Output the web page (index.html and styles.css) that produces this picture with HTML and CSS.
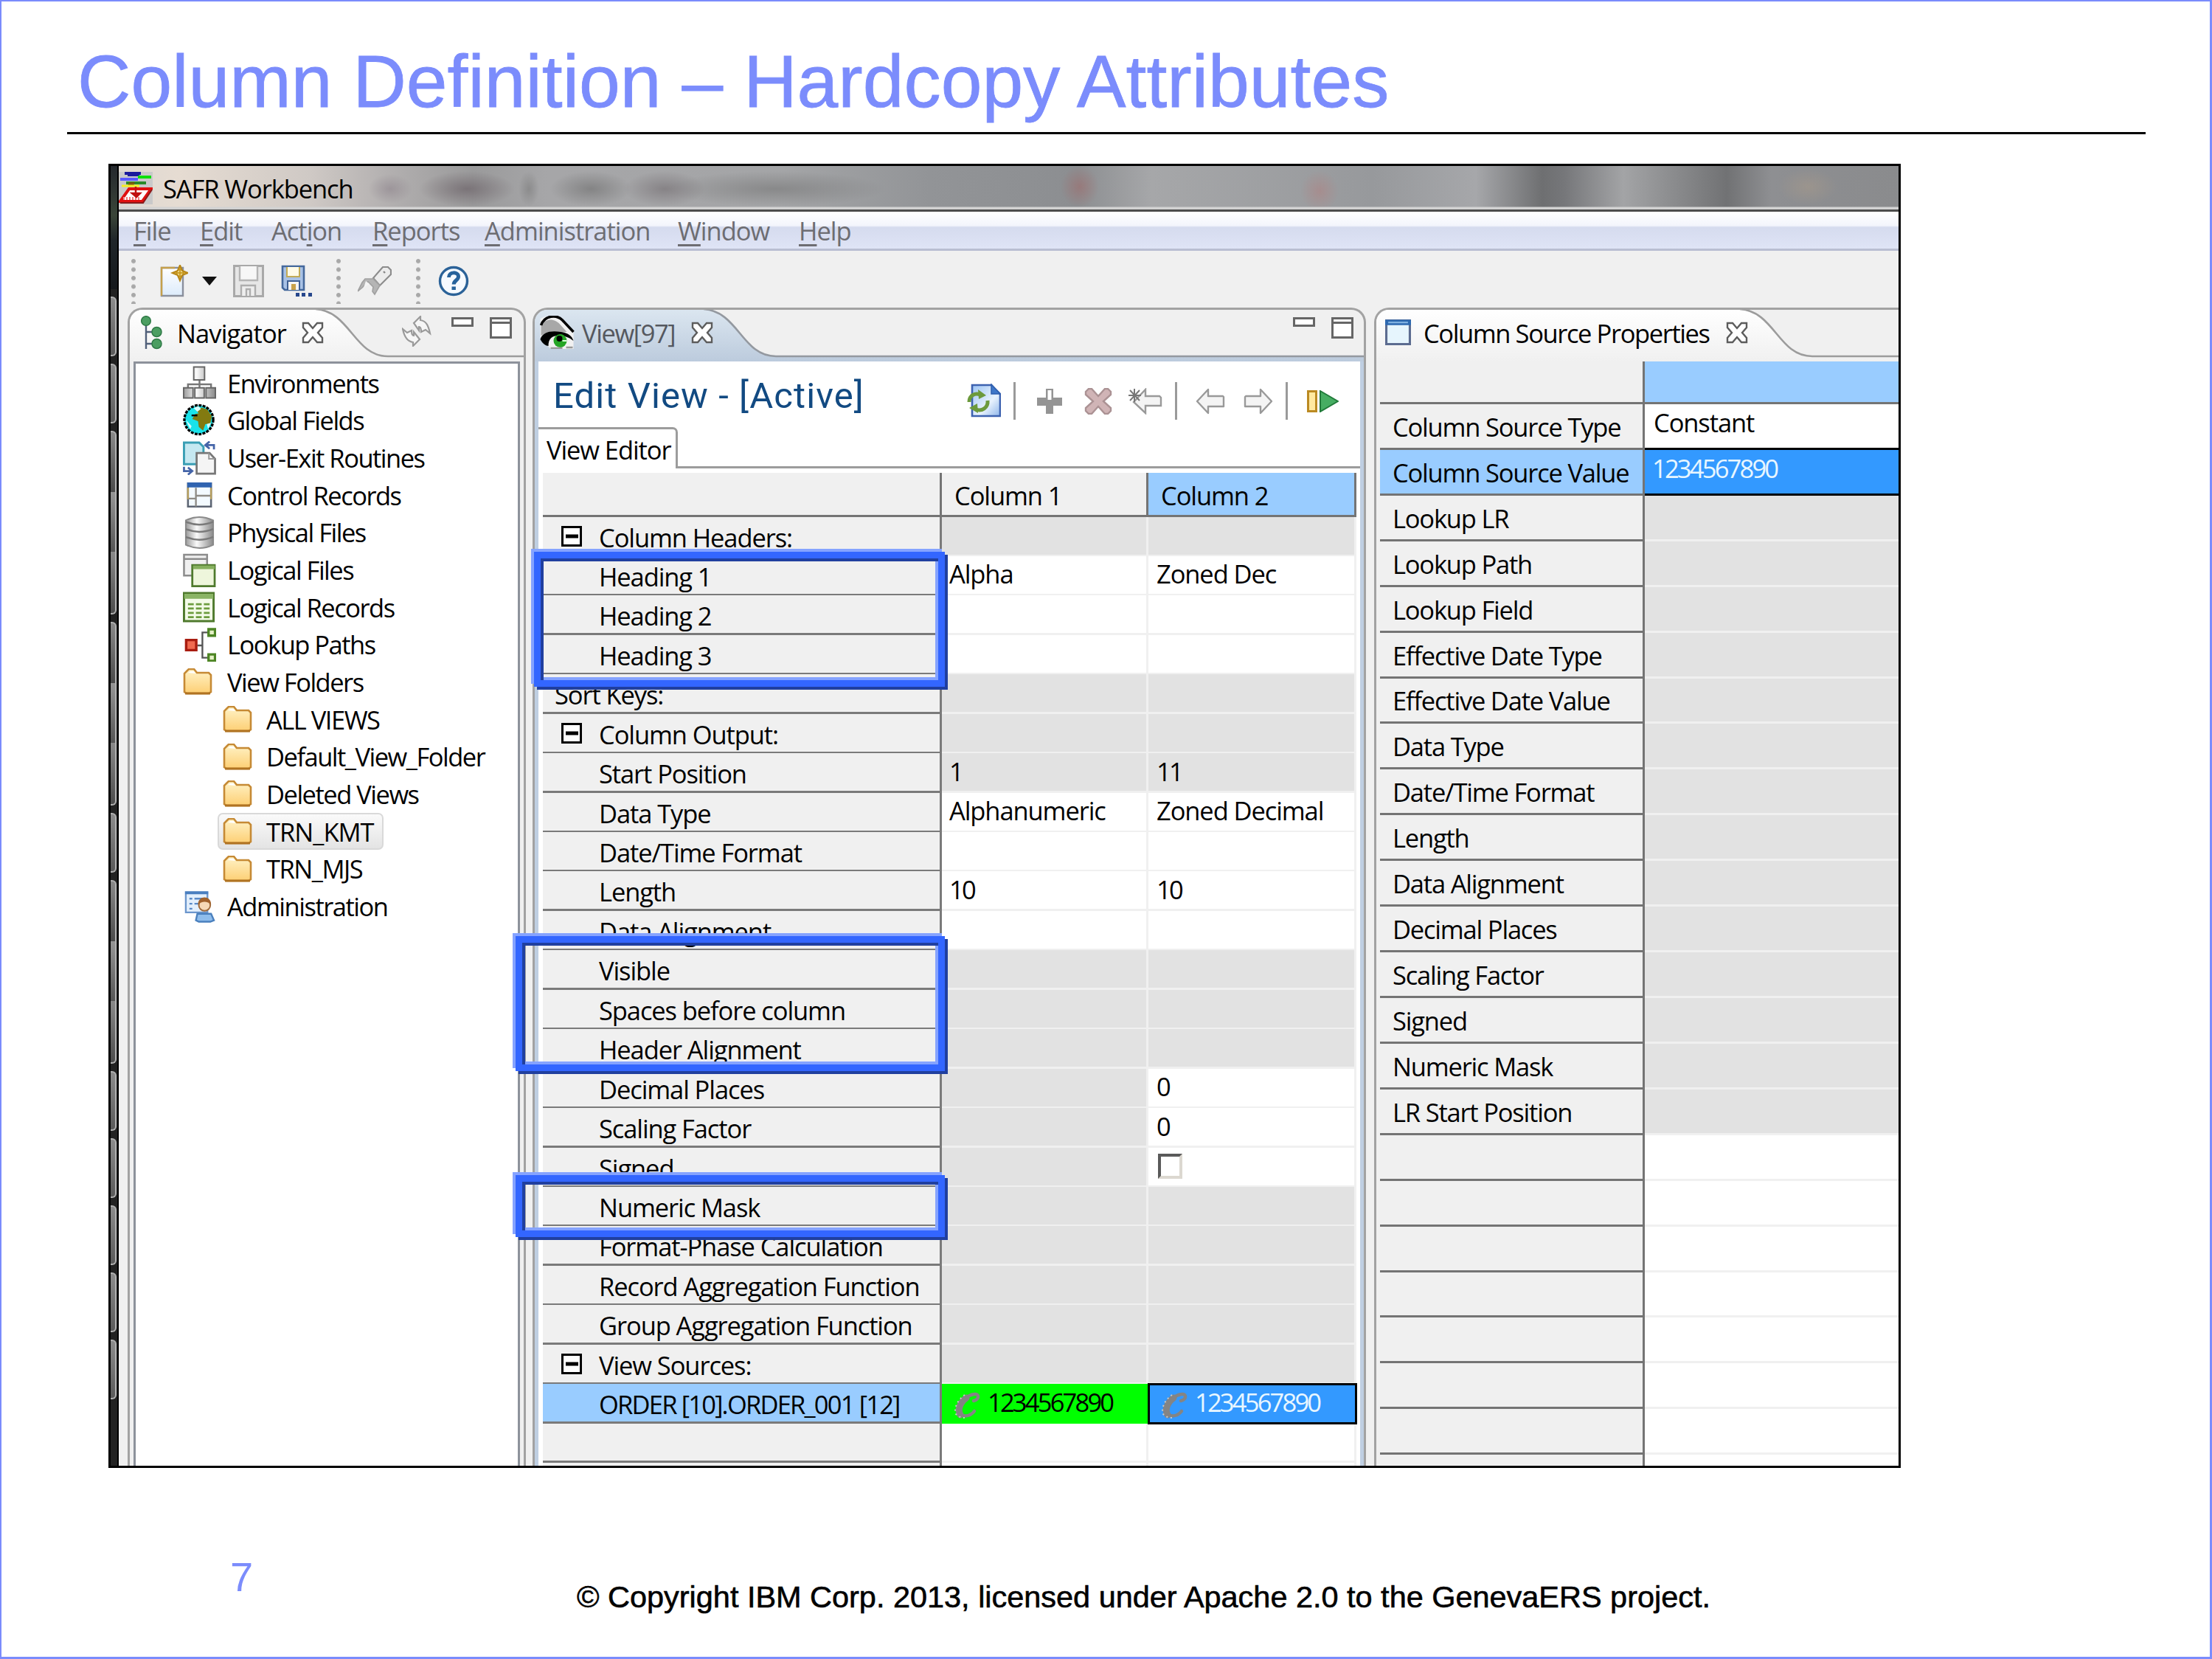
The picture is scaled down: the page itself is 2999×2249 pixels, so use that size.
FILE: index.html
```html
<!DOCTYPE html>
<html lang="en">
<head>
<meta charset="utf-8">
<title>Column Definition – Hardcopy Attributes</title>
<link rel="stylesheet" href="styles.css">
</head>
<body>
<svg class="defs" aria-hidden="true">
  <defs>
    <linearGradient id="gFolder" x1="0" y1="0" x2="0" y2="1"><stop offset="0" stop-color="#fff3c8"/><stop offset="1" stop-color="#fdcf74"/></linearGradient>
    <linearGradient id="gGrey" x1="0" y1="0" x2="1" y2="0"><stop offset="0" stop-color="#9a9a9a"/><stop offset=".4" stop-color="#fafafa"/><stop offset="1" stop-color="#8a8a8a"/></linearGradient>
    <linearGradient id="gBlueTab" x1="0" y1="0" x2="0" y2="1"><stop offset="0" stop-color="#dbe6f0"/><stop offset="1" stop-color="#bccbdd"/></linearGradient>
    <linearGradient id="gWhiteTab" x1="0" y1="0" x2="0" y2="1"><stop offset="0" stop-color="#ffffff"/><stop offset="1" stop-color="#f0f0f0"/></linearGradient>
    <linearGradient id="gDoc" x1="0" y1="0" x2="1" y2="1"><stop offset="0" stop-color="#9cc4f4"/><stop offset=".6" stop-color="#e8f2fd"/><stop offset="1" stop-color="#8fb6ea"/></linearGradient>
    <linearGradient id="gSky" x1="0" y1="0" x2="0" y2="1"><stop offset="0" stop-color="#ffffff"/><stop offset="1" stop-color="#dcebfb"/></linearGradient>
  </defs>
  <symbol id="folder" viewBox="0 0 40 36"><path d="M2 32V7l3-3 3-3h7l4 5h16l3 3v23l-3 2H5z" fill="url(#gFolder)" stroke="#c68a35" stroke-width="2.6"/><path d="M3 34h34" stroke="#b07322" stroke-width="3"/><path d="M7 6l3-2h5l2 3" fill="#fff" stroke="none"/></symbol>
  <symbol id="close" viewBox="0 0 30 30"><path d="M2 2h7l6 7 6-7h7v6l-6 7 6 7v6h-7l-6-7-6 7H2v-6l6-7-6-7z" fill="#fff" stroke="#5c5c5c" stroke-width="2.4"/></symbol>
  <symbol id="min" viewBox="0 0 30 13"><path d="M1.5 1.5h27v10h-27z" fill="#fff" stroke="#666" stroke-width="3"/></symbol>
  <symbol id="max" viewBox="0 0 30 29"><path d="M1.5 1.5h27v26h-27zM1 7.5h28" fill="#fff" stroke="#666" stroke-width="3"/></symbol>
  <symbol id="minus" viewBox="0 0 28 28"><path d="M1.5 1.5h25v25h-25z" fill="#fff" stroke="#000" stroke-width="3"/><path d="M6 14h17" stroke="#000" stroke-width="5"/></symbol>
  <symbol id="left" viewBox="0 0 40 36"><path d="M2 18L17 2v9h20l1 1v13h-21v9z" fill="#f4f4f4" stroke="#999" stroke-width="2.4" stroke-linejoin="round"/></symbol>
  <symbol id="const" viewBox="0 0 38 36"><path d="M27 12c8-2 8-10 1-9-9 1-19 10-20 20-1 13 14 11 20 3" fill="none" stroke="#848484" stroke-width="4.5" stroke-linecap="round"/><path d="M17 8C8 15 5 24 9 31" fill="none" stroke="#848484" stroke-width="9" stroke-linecap="round"/><path d="M15 4C5 11 0 22 3 30l7 5h8" fill="none" stroke="#c8c8c8" stroke-width="2" stroke-dasharray="2 4"/></symbol>
</svg>

<main class="slide">
  <h1 class="slide-title">Column Definition – Hardcopy Attributes</h1>
  <div class="rule"></div>

  <section class="shot">
    <div class="taskbar">
      <i class="tb-top"></i><i class="tb s1"></i><i class="tb s1"></i><i class="tb s3"></i><i class="tb s3"></i><i class="tb s1"></i><i class="tb s3"></i><i class="tb s1"></i><i class="tb s1"></i><i class="tb s1"></i><i class="tb s1"></i><i class="tb s1"></i>
    </div>

    <div class="window">
      <header class="titlebar">
        <svg class="app-icon" viewBox="0 0 46 44"><path d="M0 0h46v44H0z" fill="#c9c9c9"/><path d="M8 2h22M12 4h16" stroke="#1a1a9c" stroke-width="4"/><path d="M2 10h24" stroke="#5a5aff" stroke-width="4"/><path d="M26 7h18" stroke="#0be00b" stroke-width="4"/><path d="M10 15h27" stroke="#2a8a2a" stroke-width="4"/><path d="M14 14h8l-2 5h-8z" fill="#7a5a10"/><path d="M4 19h24" stroke="#f4ee20" stroke-width="3"/><path d="M14 23h30L32 40H2z" fill="#fff" stroke="#e01010" stroke-width="4"/><path d="M2 42h31l12-18" fill="none" stroke="#8a1a1a" stroke-width="2"/><path d="M6 36h22" stroke="#f08080" stroke-width="4" stroke-dasharray="2 2"/><path d="M18 29h11l-5 5zM23 20v12" stroke="#c01010" stroke-width="2.500" fill="#c01010"/></svg>
        <span class="app-name">SAFR Workbench</span>
      </header>

      <nav class="menubar">
        <span class="m-file"><u>F</u>ile</span><span class="m-edit"><u>E</u>dit</span><span class="m-action">Act<u>i</u>on</span><span class="m-reports"><u>R</u>eports</span><span class="m-admin"><u>A</u>dministration</span><span class="m-window"><u>W</u>indow</span><span class="m-help"><u>H</u>elp</span>
      </nav>

      <div class="toolbar">
        <i class="grip"></i>
        <svg class="t-new" viewBox="0 0 38 44"><path d="M2 4h29v38H2z" fill="url(#gSky)" stroke="#8a8f9c" stroke-width="2.4"/><path d="M2 42V4h18" fill="none" stroke="#c5a04b" stroke-width="2.4"/><path d="M27 1l3 7 7 3-7 3-3 7-3-7-7-3 7-3z" fill="#fff3b0" stroke="#b98716" stroke-width="2.4"/><path d="M27 5v12M21 11h12" stroke="#c99a20" stroke-width="2"/></svg>
        <svg class="t-drop" viewBox="0 0 20 12"><path d="M0 0h20L10 12z" fill="#111"/></svg>
        <svg class="t-save" viewBox="0 0 42 44"><path d="M1.5 1.5h39v41h-39z" fill="#e6e6e6" stroke="#a9a9a9" stroke-width="3"/><path d="M9 2v19h24V2" fill="#f7f7f7" stroke="#b5b5b5" stroke-width="2.4"/><path d="M11 42V28h19v14M18 42v-9h5v9" fill="#eee" stroke="#adadad" stroke-width="2.4"/></svg>
        <svg class="t-saveas" viewBox="0 0 43 44"><path d="M2 2h29v32H5l-3-3z" fill="#a9c2e6" stroke="#44689c" stroke-width="2.6"/><path d="M8 3v13h17V3" fill="#fffbe8" stroke="#c2ab57" stroke-width="2"/><path d="M9 34V22h16v12" fill="#f5f5f5" stroke="#3f5f92" stroke-width="2"/><path d="M14 26h6v8h-6z" fill="#c9a24a"/><path d="M20 38h5v5h-5zM28 38h5v5h-5zM37 38h5v5h-5z" fill="#27478c"/></svg>
        <i class="grip"></i>
        <svg class="t-torch" viewBox="0 0 46 41"><path d="M21 17L34 2h7l4 4v6L30 27z" fill="#ececec" stroke="#8c8c8c" stroke-width="2.2"/><path d="M10 18h11l9 9-7 12-3-4 1-6-7-7-8 8-6 5 6-12z" fill="#b5b5b5" stroke="#a0a0a0" stroke-width="1.6"/><path d="M11 21l5 4-8 5z" fill="#f5f5f5"/><path d="M35 8l2 2" stroke="#888" stroke-width="2.4"/></svg>
        <i class="grip"></i>
        <svg class="t-help" viewBox="0 0 42 42"><circle cx="21" cy="21" r="18.5" fill="#f6faff" stroke="#2b6298" stroke-width="3.4"/><path d="M14.5 16c0-8 13-8 13-1 0 5-6.300 5-6.300 10.500" fill="none" stroke="#27639c" stroke-width="5"/><path d="M18.500 28.500h5.400v4.500h-5.400z" fill="#27639c"/></svg>
      </div>

      <div class="panels">
        <section class="panel nav-panel">
          <header class="tabhead">
            <svg class="tabshape" viewBox="176 420 534 70"><path d="M176 420H428C475 422 480 483 526 483H710V490H176z" fill="url(#gWhiteTab)"/><path d="M428 419C475 422 480 483 526 483H710" fill="none" stroke="#9c9c9c" stroke-width="2.600"/></svg>
            <svg class="i-tree" viewBox="0 0 30 46"><path d="M7 8v37M7 22h12M7 38h12" stroke="#51607a" stroke-width="2.400" fill="none"/><g fill="#4c9e62" stroke="#2f7a46" stroke-width="1.500"><circle cx="7" cy="7" r="6.300"/><circle cx="21.500" cy="22" r="6.500"/><circle cx="21.500" cy="38" r="6.500"/></g></svg>
            <span class="tabname">Navigator</span>
            <svg class="i-close"><use href="#close"/></svg>
            <svg class="i-sync" viewBox="0 0 40 42"><g fill="#f6f6f6" stroke="#9a9a9a" stroke-width="2.200"><path d="M16 10L25 1v5c8 1 11 8 13 18l-6-5-6 3c0-5-1-7-3-7v5z"/><path d="M24 32l-9 9v-5C7 35 3 28 1 18l6 5 6-3c0 5 1 7 3 7v-5z"/></g></svg>
            <svg class="i-min"><use href="#min"/></svg>
            <svg class="i-max"><use href="#max"/></svg>
          </header>
          <ul class="tree">
            <li><svg viewBox="0 0 46 46"><path d="M23 19v6M7 30v-5h32v5M23 25v5" stroke="#777" stroke-width="2.500" fill="none"/><g fill="url(#gGrey)" stroke="#666" stroke-width="2"><path d="M15 1h15v18H15zM1 30h13v14H1zM16.500 30h13v14h-13zM32 30h13v14H32z"/></g></svg>Environments</li>
            <li><svg viewBox="0 0 46 46"><circle cx="22" cy="22" r="20" fill="#19e3ea" stroke="#000" stroke-width="3.400" stroke-dasharray="4 1.500"/><path d="M18 9l8-4 8 3 6 9-2 10-7 1-3 9-6-5-1-8-8-3 4-7 5-1z" fill="#827a10"/><path d="M15 6l6-3 4 4-5 4zM4 22l8 9-2 4zM33 28l6-2-4 9z" fill="#d8fbfb"/><path d="M12 16h8" stroke="#000" stroke-width="2.500"/></svg>Global Fields</li>
            <li><svg viewBox="0 0 46 46"><path d="M1.500 1.500h21l6 6v24h-27z" fill="#c5e8f1" stroke="#3a9fb5" stroke-width="3"/><path d="M19 16h18l7.500 8v20.500H19z" fill="#f5f5f5" stroke="#777" stroke-width="2.800"/><path d="M36 16v8h8" fill="none" stroke="#999" stroke-width="2"/><path d="M43 11V5H32m5-5l-6 5 6 5" stroke="#4464a8" stroke-width="2.800" fill="none"/><path d="M1.500 35v6H12m-5-5l6 5-6 5" stroke="#4464a8" stroke-width="2.800" fill="none"/></svg>User-Exit Routines</li>
            <li><svg viewBox="0 0 46 46"><path d="M7 7h32v32H7z" fill="#f3faff" stroke="#5c6472" stroke-width="2.600"/><path d="M6 9h34" stroke="#3064b0" stroke-width="7"/><path d="M18 13v26M7 28h11M18 24h21" stroke="#8e8c86" stroke-width="2.400"/><path d="M39 13v16M7 13v16" stroke="#b79f5c" stroke-width="2.400"/></svg>Control Records</li>
            <li><svg viewBox="0 0 46 46"><path d="M4 6q18-9 38 0v34q-19 9-38 0z" fill="url(#gGrey)" stroke="#8a8a8a" stroke-width="2"/><path d="M4 8q18 8 38 0M4 18q18 8 38 0M4 29q18 8 38 0" fill="none" stroke="#7a7a7a" stroke-width="2.600"/></svg>Physical Files</li>
            <li><svg viewBox="0 0 46 46"><path d="M1.500 1.500h32v29h-32zM1 7.500h33" fill="#f0f0f0" stroke="#8c8c8c" stroke-width="2.600"/><path d="M13 16h31v29H13z" fill="#eef6dc" stroke="#4f7a2d" stroke-width="2.800"/><path d="M14 19h30" stroke="#86b05e" stroke-width="5"/></svg>Logical Files</li>
            <li><svg viewBox="0 0 46 46"><path d="M1.500 3.500h41v39h-41z" fill="#f4fbe9" stroke="#4f7a2d" stroke-width="3"/><path d="M2 8h40" stroke="#8ab465" stroke-width="7"/><path d="M7 19h33M7 25h33M7 31h33M7 37h33" stroke="#6c9c3e" stroke-width="2.800" stroke-dasharray="8 3"/></svg>Logical Records</li>
            <li><svg viewBox="0 0 46 46"><path d="M20 24h6M35 6h-8v35h8" fill="none" stroke="#555" stroke-width="2.400"/><path d="M4.500 16.500h14v14h-14z" fill="#f06a50" stroke="#a81c10" stroke-width="3.500"/><path d="M35.500 1.500h9v9h-9zM35.500 36.500h9v9h-9z" fill="#e4f0c6" stroke="#4d8524" stroke-width="3.400"/></svg>Lookup Paths</li>
            <li><svg class="fold"><use href="#folder"/></svg>View Folders</li>
            <li class="sub"><svg class="fold"><use href="#folder"/></svg>ALL VIEWS</li>
            <li class="sub"><svg class="fold"><use href="#folder"/></svg>Default_View_Folder</li>
            <li class="sub"><svg class="fold"><use href="#folder"/></svg>Deleted Views</li>
            <li class="sub selected"><svg class="fold"><use href="#folder"/></svg>TRN_KMT</li>
            <li class="sub"><svg class="fold"><use href="#folder"/></svg>TRN_MJS</li>
            <li><svg viewBox="0 0 46 46"><path d="M4 4h30v28H4z" fill="#e3effc" stroke="#6c96cc" stroke-width="2.400"/><path d="M3 5h32" stroke="#4a7fc0" stroke-width="4"/><path d="M9 13h4M16 13h14M9 20h4M16 20h8M9 27h4" stroke="#5a8ac8" stroke-width="2.400"/><path d="M18 43l2-9h19l4 9-5 2H22z" fill="#8fbdec" stroke="#4a80be" stroke-width="2.400"/><circle cx="30" cy="22" r="8" fill="#f7d9b6" stroke="#a06a3a" stroke-width="2"/><path d="M21 21c0-13 18-13 18 0-5-5-13-5-18 0z" fill="#a2622c"/></svg>Administration</li>
          </ul>
        </section>

        <section class="panel view-panel">
          <header class="tabhead">
            <svg class="tabshape" viewBox="725 420 1124 70"><path d="M725 420H954C1001 422 1006 483 1052 483H1849V490H725z" fill="url(#gBlueTab)"/><path d="M954 419C1001 422 1006 483 1052 483H1849" fill="none" stroke="#9499a0" stroke-width="2.600"/></svg>
            <svg class="i-eye" viewBox="0 0 46 45"><path d="M0 4C14-4 30 0 45 21v24H14L0 30z" fill="#f1f1f1"/><path d="M1 14C8 2 20 4 27 12l9 10H10L1 27z" fill="#a8a8a8"/><path d="M1 13C6-1 22-2 30 6l15 16" fill="none" stroke="#000" stroke-width="3.500"/><path d="M0 32c3-10 14-12 28-10 9 1 15 5 17 12-8-6-14-7-20-7-9 0-14 4-14 14C8 41 3 38 0 32z" fill="#000"/><circle cx="27" cy="34" r="9" fill="#25a525"/><circle cx="26" cy="31" r="4" fill="#000"/><path d="M30 34h6" stroke="#d8ffd8" stroke-width="2"/><path d="M14 44h16M35 43h9" stroke="#999" stroke-width="2.500"/></svg>
            <span class="tabname dim">View[97]</span>
            <svg class="i-close"><use href="#close"/></svg>
            <svg class="i-min"><use href="#min"/></svg>
            <svg class="i-max"><use href="#max"/></svg>
          </header>
          <div class="editor">
            <div class="formhead">
              <h2>Edit View - [Active]</h2>
              <svg class="e-refresh" viewBox="0 0 46 46"><path d="M7 2h26l12 12v30H7z" fill="url(#gDoc)" stroke="#3d62b0" stroke-width="2.600"/><path d="M33 1v13h12z" fill="#3f77c8" stroke="#2e5fae" stroke-width="1.500"/><g fill="none" stroke="#6c9a3c" stroke-width="5"><path d="M3 25c0-9 8-13 15-10M28 23c1 10-8 15-16 12"/></g><path d="M15 8l11 8-10 5zM15 40L3 33l11-6z" fill="#6c9a3c"/></svg>
              <i class="sep"></i>
              <svg class="e-plus" viewBox="0 0 36 36"><path d="M13 1h10v12h12v11H23v11H13V24H1V13h12z" fill="#949494"/><path d="M15.500 3h5v13h-5z" fill="#fff"/></svg>
              <svg class="e-del" viewBox="0 0 38 36"><path d="M2 5l4-4h4l9 10 9-10h4l4 4v4L26 18l10 9v4l-4 4h-4l-9-10-9 10H6l-4-4v-4l10-9L2 9z" fill="#d0b4b6" stroke="#ab9294" stroke-width="2.400"/></svg>
              <svg class="e-star" viewBox="0 0 46 36"><path d="M7 19L23 2v9h19l2 2v11H23v10z" fill="#f4f4f4" stroke="#999" stroke-width="2.400"/><path d="M8 1v18M0 10h17M2 3l13 14M15 3L2 17" stroke="#777" stroke-width="2"/></svg>
              <i class="sep"></i>
              <svg class="e-left"><use href="#left"/></svg>
              <svg class="e-right"><use href="#left"/></svg>
              <i class="sep"></i>
              <svg class="e-run" viewBox="0 0 43 30"><path d="M1.500 1.500h11v27h-11z" fill="#ffe9a0" stroke="#bb8a22" stroke-width="3"/><path d="M18 1l24 14-24 14z" fill="#46ad62" stroke="#217a3a" stroke-width="2"/></svg>
            </div>
            <div class="subtabs"><span class="subtab">View Editor</span><i class="subline"></i></div>
            <div class="grid">
              <div class="ghead"><b></b><b>Column 1</b><b class="sel">Column 2</b></div>
              <div class="grow g"><b class="grp"><svg class="box"><use href="#minus"/></svg>Column Headers:</b><i></i><i></i></div>
              <div class="grow"><b>Heading 1</b><i>Alpha</i><i>Zoned Dec</i></div>
              <div class="grow"><b>Heading 2</b><i></i><i></i></div>
              <div class="grow"><b>Heading 3</b><i></i><i></i></div>
              <div class="grow g"><b class="flat">Sort Keys:</b><i></i><i></i></div>
              <div class="grow g"><b class="grp"><svg class="box"><use href="#minus"/></svg>Column Output:</b><i></i><i></i></div>
              <div class="grow g"><b>Start Position</b><i>1</i><i class="num">11</i></div>
              <div class="grow"><b>Data Type</b><i>Alphanumeric</i><i>Zoned Decimal</i></div>
              <div class="grow"><b>Date/Time Format</b><i></i><i></i></div>
              <div class="grow"><b>Length</b><i class="num">10</i><i class="num">10</i></div>
              <div class="grow"><b>Data Alignment</b><i></i><i></i></div>
              <div class="grow g"><b>Visible</b><i></i><i></i></div>
              <div class="grow g"><b>Spaces before column</b><i></i><i></i></div>
              <div class="grow g"><b>Header Alignment</b><i></i><i></i></div>
              <div class="grow g1"><b>Decimal Places</b><i></i><i>0</i></div>
              <div class="grow g1"><b>Scaling Factor</b><i></i><i>0</i></div>
              <div class="grow g1"><b>Signed</b><i></i><i><span class="check"></span></i></div>
              <div class="grow g"><b>Numeric Mask</b><i></i><i></i></div>
              <div class="grow g"><b>Format-Phase Calculation</b><i></i><i></i></div>
              <div class="grow g"><b>Record Aggregation Function</b><i></i><i></i></div>
              <div class="grow g"><b>Group Aggregation Function</b><i></i><i></i></div>
              <div class="grow g"><b class="grp"><svg class="box"><use href="#minus"/></svg>View Sources:</b><i></i><i></i></div>
              <div class="grow order"><b>ORDER [10].ORDER_001 [12]</b><i class="green num"><svg class="const"><use href="#const"/></svg>1234567890</i><i class="blue num"><svg class="const"><use href="#const"/></svg>1234567890</i></div>
              <div class="grow"><b></b><i></i><i></i></div>
              <div class="grow"><b></b><i></i><i></i></div>
            </div>
          </div>
        </section>

        <section class="panel prop-panel">
          <header class="tabhead">
            <svg class="tabshape" viewBox="1866 420 708 70"><path d="M1866 420H2359C2406 422 2411 483 2457 483H2574V490H1866z" fill="url(#gWhiteTab)"/><path d="M2359 419C2406 422 2411 483 2457 483H2574" fill="none" stroke="#9c9c9c" stroke-width="2.600"/></svg>
            <svg class="i-prop" viewBox="0 0 34 34"><path d="M1.500 1.500h31v31h-31z" fill="#e6f5fd" stroke="#5c6c90" stroke-width="3"/><path d="M0 4h34" stroke="#2d69b0" stroke-width="7"/><path d="M4 4h26" stroke="#7fb0e0" stroke-width="2"/></svg>
            <span class="tabname">Column Source Properties</span>
            <svg class="i-close"><use href="#close"/></svg>
          </header>
          <div class="props">
            <div class="phead"><b></b><i></i></div>
            <div class="prow w"><b>Column Source Type</b><i>Constant</i></div>
            <div class="prow cur"><b>Column Source Value</b><i class="num">1234567890</i></div>
            <div class="prow"><b>Lookup LR</b><i></i></div>
            <div class="prow"><b>Lookup Path</b><i></i></div>
            <div class="prow"><b>Lookup Field</b><i></i></div>
            <div class="prow"><b>Effective Date Type</b><i></i></div>
            <div class="prow"><b>Effective Date Value</b><i></i></div>
            <div class="prow"><b>Data Type</b><i></i></div>
            <div class="prow"><b>Date/Time Format</b><i></i></div>
            <div class="prow"><b>Length</b><i></i></div>
            <div class="prow"><b>Data Alignment</b><i></i></div>
            <div class="prow"><b>Decimal Places</b><i></i></div>
            <div class="prow"><b>Scaling Factor</b><i></i></div>
            <div class="prow"><b>Signed</b><i></i></div>
            <div class="prow"><b>Numeric Mask</b><i></i></div>
            <div class="prow"><b>LR Start Position</b><i></i></div>
            <div class="prow w"><b></b><i></i></div>
            <div class="prow w"><b></b><i></i></div>
            <div class="prow w"><b></b><i></i></div>
            <div class="prow w"><b></b><i></i></div>
            <div class="prow w"><b></b><i></i></div>
            <div class="prow w"><b></b><i></i></div>
            <div class="prow w"><b></b><i></i></div>
            <div class="prow w"><b></b><i></i></div>
          </div>
        </section>
      </div>
    </div>

    <div class="callout c1"></div>
    <div class="callout c2"></div>
    <div class="callout c3"></div>
  </section>

  <footer class="foot">
    <span class="pageno">7</span>
    <span class="copy">© Copyright IBM Corp. 2013, licensed under Apache 2.0 to the GenevaERS project.</span>
  </footer>
</main>
</body>
</html>
```
FILE: styles.css
```css
* { box-sizing: border-box; }
html, body { margin: 0; }
b, i { font-weight: inherit; font-style: inherit; }
.defs { position: absolute; width: 0; height: 0; }

.slide {
  width: 2999px;
  height: 2249px;
  background: #fff;
  border: 2px solid #7b8cfc;
  border-right-width: 3px;
  border-bottom-width: 3px;
  overflow: hidden;
  font-family: "Liberation Sans", Arial, sans-serif;
}
.slide-title {
  margin: 51px 0 0 103px;
  height: 126px;
  font-size: 100.2px;
  line-height: 115px;
  font-weight: 400;
  letter-spacing: 0.05px;
  color: #7b8cfc;
  white-space: nowrap;
  -webkit-text-stroke: 0.8px #7b8cfc;
}
.rule { width: 2818px; height: 3px; margin-left: 89px; background: #000; }

/* Captured application window */
.shot {
  position: relative;
  display: flex;
  width: 2430px;
  height: 1768px;
  margin: 40px 0 0 145px;
  border: 3px solid #000;
  overflow: hidden;
  background: #f0f0f0;
  font-family: "Open Sans", "Noto Sans", sans-serif;
  font-size: 34.5px;
  letter-spacing: -1.1px;
  color: #000;
  white-space: nowrap;
}
.shot svg { display: block; flex: none; }
.num { letter-spacing: -2.8px; }
.taskbar {
  width: 11px;
  flex: none;
  display: flex;
  flex-direction: column;
  gap: 10px;
  background: #222;
  border-right: 2px solid #000;
}
.tb-top { flex: none; height: 167px; background: linear-gradient(#24282d, #3a4538 40%, #20262a 60%, #15191c); }
.tb { flex: none; width: 8px; border: 2px solid #b0b0b0; border-left: 0; border-radius: 0 6px 6px 0; background: linear-gradient(#8c8c8c, #5a5a5a); }
.s1 { height: 81px; }
.s3 { height: 249px; background: linear-gradient(#8a8a8a, #4a4a4a 33%, #969696 33%, #555 66%, #8a8a8a 66%, #4c4c4c); }

.window { flex: 1; min-width: 0; display: flex; flex-direction: column; }
.titlebar {
  height: 62px;
  flex: none;
  display: flex;
  align-items: flex-start;
  padding-top: 8px;
  border-bottom: 3px solid #4c4c4c;
  background:
    linear-gradient(transparent 55px, #d2d2d2 56px),
    radial-gradient(ellipse 30px 20px at 368px 31px, #8a7f8888, transparent),
    radial-gradient(ellipse 65px 24px at 472px 31px, #6a6066aa, transparent),
    radial-gradient(ellipse 14px 24px at 556px 31px, #77777788, transparent),
    radial-gradient(ellipse 55px 24px at 640px 31px, #6d6d6d99, transparent),
    radial-gradient(ellipse 55px 24px at 740px 31px, #726c7099, transparent),
    radial-gradient(ellipse 150px 24px at 890px 31px, #70707088, transparent),
    radial-gradient(ellipse 26px 28px at 1303px 28px, #a0686888, transparent),
    radial-gradient(ellipse 26px 28px at 1628px 34px, #b0808088, transparent),
    radial-gradient(ellipse 40px 24px at 2290px 28px, #a89a8a88, transparent),
    linear-gradient(90deg, #ded8d2 0, #e6dcd2 80px, #cfc9c5 260px, #b4b1b1 360px, #9a9a9b 480px, #a6a6a8 580px, #a4a5a7 900px, #929497 1100px, #8c8e91 1300px, #a6a7a9 1400px, #97999c 1700px, #a6a7aa 1840px, #6e6f71 1930px, #76777a 1960px, #a3a4a6 2040px, #717274 2180px, #8e8f92 2240px, #8a8b8d 2413px);
}
.app-icon { width: 46px; height: 44px; }
.app-name { margin-left: 14px; line-height: 45px; }

.menubar {
  height: 53px;
  flex: none;
  display: flex;
  align-items: center;
  padding: 1px 0 0 20px;
  letter-spacing: -1px;
  color: #6d6d72;
  background: linear-gradient(#fff 0, #f3f5fc 38%, #d5dbee 42%, #dfe4f6 100%);
  border-bottom: 3px solid #b9bed2;
}
.menubar u { text-decoration-thickness: 3px; text-underline-offset: 5px; }
.m-file { width: 90px; } .m-edit { width: 97px; } .m-action { width: 137px; } .m-reports { width: 152px; }
.m-admin { width: 262px; } .m-window { width: 164px; }

.toolbar { height: 77px; flex: none; display: flex; align-items: center; padding: 4px 0 0 17px; }
.grip { width: 6px; height: 62px; background: radial-gradient(circle at 3px 4px, #a8a8a8 2.5px, transparent 3.5px) 0 0 / 6px 11.500px; }
.t-new { width: 38px; height: 44px; margin-left: 33px; }
.t-drop { width: 20px; height: 12px; margin-left: 19px; }
.t-save { width: 42px; height: 44px; margin-left: 22px; }
.t-saveas { width: 43px; height: 44px; margin-left: 23px; }
.t-saveas + .grip { margin-left: 32px; }
.t-torch { width: 46px; height: 41px; margin-left: 23px; }
.t-torch + .grip { margin-left: 33px; }
.t-help { width: 42px; height: 42px; margin-left: 24px; }

.panels { flex: 1; min-height: 0; display: flex; padding-left: 12px; }
.panel {
  flex: none;
  display: flex;
  flex-direction: column;
  border: 3px solid #a2a2a2;
  border-bottom: 0;
  border-radius: 20px 20px 0 0;
  overflow: hidden;
}
.nav-panel { width: 540px; margin-right: 9px; }
.view-panel { width: 1130px; margin-right: 11px; }
.prop-panel { width: 711px; border-right: 0; border-top-right-radius: 0; }
.tabhead { position: relative; height: 70px; flex: none; display: flex; align-items: flex-start; }
.tabhead > * { position: relative; }
.tabhead .tabshape { position: absolute; inset: 0; width: 100%; height: 100%; }
.tabname { line-height: 48px; margin-top: 8px; letter-spacing: -1.4px; }
.dim { color: #55585f; }
.nav-panel .tabname { letter-spacing: -0.9px; }
.i-close { width: 30px; height: 30px; margin-top: 16px; }
.i-min { width: 30px; height: 13px; margin-top: 10px; }
.i-max { width: 30px; height: 29px; margin-top: 10px; }
.i-tree { width: 30px; height: 46px; margin: 8px 0 0 15px; }
.i-sync { width: 40px; height: 42px; margin-top: 8px; margin-left: auto; }
.nav-panel .tabname { width: 169px; margin-left: 19px; }
.nav-panel .i-min { margin-left: 27px; }
.nav-panel .i-max { margin: 10px 16px 0 22px; }
.i-eye { width: 47px; height: 45px; margin: 8px 0 0 7px; }
.view-panel .tabname { width: 148px; margin-left: 10px; }
.view-panel .i-min { margin-left: auto; }
.view-panel .i-max { margin: 10px 14px 0 22px; }
.i-prop { width: 35px; height: 35px; margin: 13px 0 0 12px; }
.prop-panel .tabname { width: 410px; margin-left: 17px; }

.tree {
  flex: 1;
  margin: 0 5px;
  padding: 1px 0 0 64px;
  list-style: none;
  letter-spacing: -1.5px;
  background: #fff;
  border: 3px solid #8d929b;
  border-bottom: 0;
}
.tree li { display: flex; align-items: center; column-gap: 15px; height: 50.65px; width: fit-content; }
.tree li svg { width: 45px; height: 46px; }
.tree li .fold { width: 40px; height: 36px; margin-right: 5px; }
.tree .sub { margin-left: 47px; padding: 0 11px 0 5px; border: 2px solid transparent; column-gap: 14px; }
.tree .selected { border-color: #d9d9d9; border-radius: 7px; background: linear-gradient(#fafafa, #e4e4e4); letter-spacing: -1px; }

.editor { flex: 1; background: #fff; border: 5px solid #bfcfe2; border-width: 0 5px; }
.formhead { height: 89px; display: flex; align-items: flex-start; padding: 28px 29px 0 20px; }
.formhead h2 { width: 566px; margin: -9px 0 0; font: 400 49px/56px Roboto, sans-serif; letter-spacing: 1.1px; color: #124a82; }
.e-refresh { width: 46px; height: 46px; margin-top: 2px; }
.sep { width: 3px; height: 51px; background: #9a9a9a; margin-left: 17px; }
.e-plus { width: 36px; height: 36px; margin: 8px 0 0 28px; }
.e-del { width: 38px; height: 36px; margin: 8px 0 0 29px; }
.e-star { width: 46px; height: 36px; margin: 8px 0 0 22px; }
.e-left, .e-right { width: 40px; height: 36px; margin: 8px 0 0 25px; }
.e-right { transform: scaleX(-1); }
.e-run { width: 43px; height: 30px; margin: 11px 0 0 26px; }
.subtabs { display: flex; height: 56px; }
.subtab { width: 189px; padding-left: 11px; line-height: 56px; border: 3px solid #9c9c9c; border-width: 3px 3px 0 0; border-radius: 0 7px 0 0; }
.subline { flex: 1; border-bottom: 3px solid #9c9c9c; }

.grid { width: 1103px; margin: 6px 0 0 6px; }
.ghead, .grow { display: grid; grid-template-columns: 541px 280px 282px; }
.ghead { height: 59.500px; }
.ghead b { display: flex; align-items: center; padding: 4px 0 0 17px; background: #f0f0f0; border: 2px solid #747474; border-width: 0 3px 3px 0; }
.ghead .sel { background: #99ccff; }
.grow { height: 53.450px; }
.grow b { display: flex; align-items: center; padding: 4px 0 0 76px; background: #f0f0f0; border: solid #7a7a7a; border-width: 0 3px 3px 0; }
.grow .flat { padding-left: 16px; }
.grow .grp { padding-left: 25px; }
.box { width: 28px; height: 28px; margin: -2px 23px 0 0; }
.grow i { display: flex; align-items: center; padding: 0 0 3px 10px; border: solid #f0f0f0; border-width: 0 3px 3px 0; background: #fff; }
.grow i + i { padding-left: 11px; }
.g i, .g1 b + i { background: #e2e2e2; }
.order b { background: #99ccff; letter-spacing: -1.8px; }
.order .green { background: #00ff00; border-color: #00ff00; padding-left: 16px; }
.order .blue { background: #3399ff; color: #e8f6ff; border: 0; outline: 3px solid #000; outline-offset: -2px; position: relative; padding: 0 0 6px 17px; }
.const { width: 38px; height: 36px; margin: 10px 8px 0 0; }
.check { width: 33px; height: 34px; margin: 3px 0 0 2px; border: 4px solid #5a5a5a; border-right-color: #dcd8d0; border-bottom-color: #dcd8d0; background: #fff; }

.props { flex: 1; margin-left: 5px; }
.phead, .prow { display: grid; grid-template-columns: 359px 1fr; }
.phead { height: 58px; }
.prow { height: 61.930px; }
.props b { display: flex; align-items: center; padding: 2px 0 0 17px; letter-spacing: -1.2px; background: #f0f0f0; border: solid #747474; border-width: 0 3px 3px 0; }
.props i { display: flex; align-items: center; padding: 0 0 9px 12px; background: #e2e2e2; border-bottom: 3px solid #f0f0f0; }
.phead i { background: #99ccff; border-color: #747474; }
.props .w i { background: #fff; }
.cur b { background: #99ccff; }
.cur i { background: #3399ff; color: #e8f6ff; padding-left: 10px; border-color: #000; box-shadow: 0 -3px #000; }

/* Blue highlight frames: light edge behind, dark edge offset, main band on top */
.callout, .callout::before, .callout::after { position: absolute; border: 9px solid #85a3ff; }
.callout::before, .callout::after { content: ""; }
.callout::before { border-color: #203f9f; inset: -1px -17px -17px -1px; }
.callout::after { border-color: #3366ff; inset: -5px -13px -13px -5px; }
.c1 { left: 570px; top: 519px; width: 557px; height: 183px; }
.c2 { left: 545px; top: 1040px; width: 582px; height: 183px; }
.c3 { left: 545px; top: 1364px; width: 582px; height: 84px; }

.foot { display: flex; align-items: baseline; padding: 138px 0 0 310px; }
.pageno { width: 470px; font-size: 56px; line-height: 64px; color: #7b8cfc; position: relative; top: -22px; }
.copy { font-size: 41.45px; white-space: nowrap; -webkit-text-stroke: 0.6px #000; }
```
